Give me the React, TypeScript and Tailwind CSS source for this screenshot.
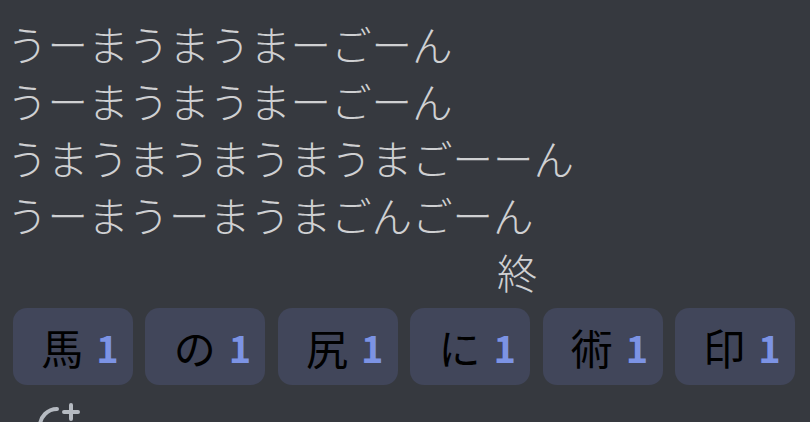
import type { ReactNode } from 'react';

const lines = [
  'うーまうまうまーごーん',
  'うーまうまうまーごーん',
  'うまうまうまうまうまごーーん',
  'うーまうーまうまごんごーん',
];

const reactions = ['馬', 'の', '尻', 'に', '術', '印'];

function Reaction({ children }: { children: ReactNode }) {
  return (
    <div className="flex h-[77px] w-[120px] items-center justify-center gap-[13px] rounded-[14px] bg-[#41465a] pl-[14px]">
      <span
        className="text-[42px] font-normal leading-none text-black"
        style={{ fontFamily: '"Noto Sans CJK JP", sans-serif' }}
      >
        {children}
      </span>
      <span className="text-[38px] font-bold leading-none text-[#7c93e4]">1</span>
    </div>
  );
}

function AddReactionIcon() {
  return (
    <svg width="48" height="48" viewBox="0 0 24 24" fill="none" aria-hidden="true">
      <path
        d="M12 3.5a8.5 8.5 0 1 0 8.5 8.5"
        stroke="#b5bac1"
        strokeWidth="2"
        strokeLinecap="round"
      />
      <path d="M19 1.5v7M15.5 5h7" stroke="#b5bac1" strokeWidth="2" strokeLinecap="round" />
    </svg>
  );
}

export default function App() {
  return (
    <div
      className="h-[422px] w-[810px] overflow-hidden bg-[#36393f] pt-[15px]"
      style={{ fontFamily: '"Noto Sans CJK JP", "Noto Sans", sans-serif' }}
    >
      <div className="pl-[7px] text-[40.5px] font-light leading-[57px] text-[#cfd0d2]">
        {lines.map((line, i) => (
          <div key={i}>{line}</div>
        ))}
        <div className="pl-[490px]">終</div>
      </div>
      <div className="mt-[8px] flex gap-[12.4px] pl-[13px]">
        {reactions.map((r) => (
          <Reaction key={r}>{r}</Reaction>
        ))}
      </div>
      <div className="mt-[17px] pl-[33px]">
        <AddReactionIcon />
      </div>
    </div>
  );
}
